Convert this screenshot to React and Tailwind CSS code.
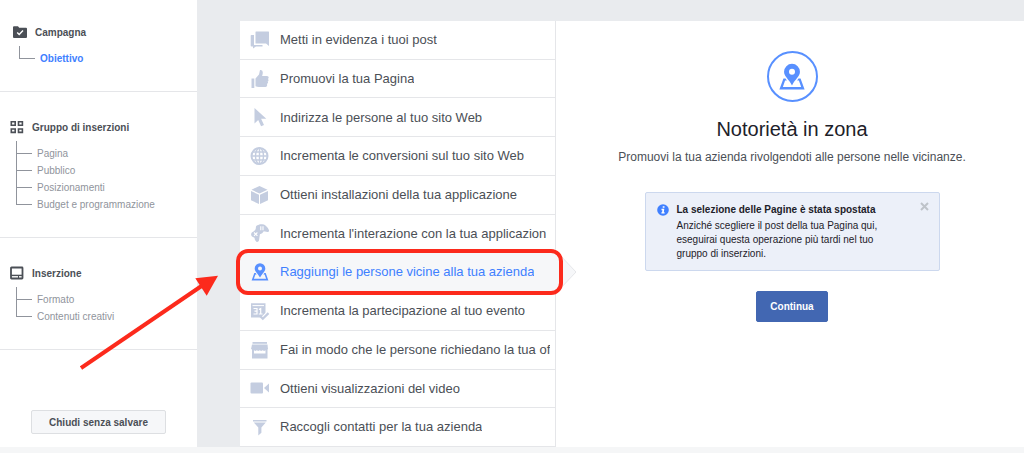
import React, { useState } from "react";
import clsx from "clsx";

const PostsIcon = () => (
  <svg width="20" height="20" viewBox="0 0 20 20" fill="currentColor" aria-hidden="true">
    <path d="M6 1.500h12.500q.5 0 .5 .5v14l-3-2.500H6q-.5 0-.5-.5V2q0-.5 .5-.5z" />
    <path d="M1.500 5H4v10h8.500v1.500H6L3 18.500v-2H1.500q-.8 0-.8-.8V5.800q0-.8 .8-.8z" />
  </svg>
);

const LikeIcon = () => (
  <svg width="20" height="20" viewBox="0 0 20 20" fill="currentColor" aria-hidden="true">
    <path d="M1.500 9.500h2.800V19H1.500z" />
    <path d="M5.500 9.500l3.500-4 1-4.500q2.800-.6 2.800 2.500 0 1.800-.7 3.500H17q1.700 0 1.700 1.500 0 1-.8 1.400.9.500.6 1.500-.2.800-.9 1.100.7.600.3 1.600-.3.700-1 .9.500.6.200 1.400-.4 1.600-1.800 1.600H9q-2 0-3.500-.8z" />
  </svg>
);

const CursorIcon = () => (
  <svg width="20" height="20" viewBox="0 0 20 20" fill="currentColor" aria-hidden="true">
    <path d="M4.500 1v15.500l3.700-3.400 2.900 6.200 2.900-1.300-2.900-6.200h5.200z" />
  </svg>
);

const GlobeIcon = () => (
  <svg width="20" height="20" viewBox="0 0 20 20" fill="none" stroke="currentColor" aria-hidden="true">
    <circle cx="9.500" cy="10" r="8" strokeWidth="2" />
    <ellipse cx="9.500" cy="10" rx="4" ry="8" strokeWidth="1.400" />
    <path d="M9.500 2v16M1.500 10h16M3 6h13M3 14h13" strokeWidth="1.400" />
  </svg>
);

const BoxIcon = () => (
  <svg width="20" height="20" viewBox="0 0 20 20" fill="currentColor" aria-hidden="true">
    <path d="M9.500 1l8 3.700-8 3.800-8-3.800z" />
    <path d="M1 6l8 3.700V19l-8-3.800zM18 6l-8 3.700V19l8-3.800z" />
  </svg>
);

const GamepadIcon = () => (
  <svg width="20" height="20" viewBox="0 0 20 20" aria-hidden="true">
    <path
      d="M6 3.500q.6-1.700 2.300-1.600Q9.500.8 11.500 1.300q2.500-.2 4 1.200 2.500 2 3.500 4.800.3 1.900-1.600 1.700l-3.600-.8q-1.300 2.300-3.900 3L9 17.500q-.8 2-2.600 1.300-1.700-.8-1.900-4L2 13.500q-1.700-2-.2-3.900Q4.500 8.500 5.700 6z"
      fill="currentColor"
    />
    <path d="M10.800 3.200v4M13 3.200v4M4 9.500l3.400 3.400M7.400 9.500L4 12.900" stroke="#fff" strokeWidth="1.100" />
  </svg>
);

const PlaceIcon = ({ size = 20 }) => (
  <svg width={size} height={size} viewBox="0 0 20 20" fill="currentColor" aria-hidden="true">
    <path
      fillRule="evenodd"
      d="M10 1.200a5.300 5.300 0 0 1 5.300 5.300c0 3.300-3.300 5-5.300 9.100-2-4.100-5.300-5.800-5.300-9.100A5.300 5.300 0 0 1 10 1.200zm0 3.300a2 2 0 1 0 0 4 2 2 0 0 0 0-4z"
    />
    <path
      fillRule="evenodd"
      d="M4.300 11h1.400l.9 1.400h-1.200L3.900 16.700h12.200l-1.500-4.300h-1.200l.9-1.400h1.400l2.700 7.400H1.600z"
    />
  </svg>
);

const EventIcon = () => (
  <svg width="20" height="20" viewBox="0 0 20 20" aria-hidden="true">
    <path d="M1 2.200h14.500v10l-3.500 4.300H1z" fill="currentColor" />
    <path d="M2.500 4.600h11.500" stroke="#fff" strokeWidth="1" />
    <path d="M3.500 7.500h3.500v5.500H3.500M4.500 10.200H7M9 8.500l1.700-1v5.500M8.800 13h3.800" fill="none" stroke="#fff" strokeWidth="1.200" />
    <path d="M12.300 15.500l1 1 4.500-4.500" fill="none" stroke="#fff" strokeWidth="3.500" />
    <path d="M9.800 14.800l3 3 5.700-5.700" fill="none" stroke="currentColor" strokeWidth="2.200" />
  </svg>
);

const StoreIcon = () => (
  <svg width="20" height="20" viewBox="0 0 20 20" fill="currentColor" aria-hidden="true">
    <path d="M2.500 2h14.500v1.800H2.500z" />
    <path d="M2 4.600h15.500l.5 4.600H1z" />
    <path
      fillRule="evenodd"
      d="M2 9h15.500v9.500H2zm2 1.300v3.200h11.500v-3.200l-1.400.8-1.500-.8-1.400.8-1.500-.8-1.400.8-1.500-.8-1.400.8z"
    />
  </svg>
);

const VideoIcon = () => (
  <svg width="20" height="20" viewBox="0 0 20 20" fill="currentColor" aria-hidden="true">
    <rect x="0.500" y="4.500" width="12.500" height="11" rx="1" />
    <path d="M19 5.500v9l-5-4.500z" />
  </svg>
);

const FunnelIcon = () => (
  <svg width="20" height="20" viewBox="0 0 20 20" fill="currentColor" aria-hidden="true">
    <path d="M3 3h13.500v1.500H3zM3.800 5.500h12l-4.400 5v5.300L8.300 18.500v-8z" />
  </svg>
);

const FolderIcon = () => (
  <svg width="14" height="12" viewBox="0 0 14 12" aria-hidden="true">
    <path d="M0 1.200Q0 .3 1 .3h4l1.200 1.400H13q1 0 1 1V11q0 1-1 1H1q-1 0-1-1z" fill="#4b4f56" />
    <path d="M4.200 6.500l2 2 3.800-4" fill="none" stroke="#fff" strokeWidth="1.400" />
  </svg>
);

const GridIcon = () => (
  <svg width="14" height="14" viewBox="0 0 14 14" fill="none" stroke="#4b4f56" strokeWidth="1.600" aria-hidden="true">
    <path d="M1.300 1.800h3.900v3.400H1.300zM8.500 1.800h3.900v3.400H8.500zM1.300 9h3.900v3.400H1.300zM8.500 9h3.900v3.400H8.500z" />
  </svg>
);

const AdIcon = () => (
  <svg width="14" height="14" viewBox="0 0 14 14" aria-hidden="true">
    <rect x="1" y="1.500" width="11.500" height="11" rx="0.500" fill="none" stroke="#4b4f56" strokeWidth="1.800" />
    <path d="M1 8.700h11.500v1.400H1z" fill="#4b4f56" />
    <path d="M8 9.500h1v2.500H8z" fill="#4b4f56" />
  </svg>
);

const sections = [
  {
    title: "Campagna",
    icon: FolderIcon,
    indent: true,
    items: [{ label: "Obiettivo", active: true }],
  },
  {
    title: "Gruppo di inserzioni",
    icon: GridIcon,
    items: [
      { label: "Pagina" },
      { label: "Pubblico" },
      { label: "Posizionamenti" },
      { label: "Budget e programmazione" },
    ],
  },
  {
    title: "Inserzione",
    icon: AdIcon,
    items: [{ label: "Formato" }, { label: "Contenuti creativi" }],
  },
];

const objectives = [
  { id: "post", label: "Metti in evidenza i tuoi post", icon: PostsIcon },
  { id: "pagina", label: "Promuovi la tua Pagina", icon: LikeIcon },
  { id: "sito", label: "Indirizza le persone al tuo sito Web", icon: CursorIcon },
  { id: "conversioni", label: "Incrementa le conversioni sul tuo sito Web", icon: GlobeIcon },
  { id: "installazioni", label: "Ottieni installazioni della tua applicazione", icon: BoxIcon },
  { id: "interazione", label: "Incrementa l'interazione con la tua applicazion", icon: GamepadIcon },
  { id: "zona", label: "Raggiungi le persone vicine alla tua azienda", icon: PlaceIcon },
  { id: "evento", label: "Incrementa la partecipazione al tuo evento", icon: EventIcon },
  { id: "offerta", label: "Fai in modo che le persone richiedano la tua of", icon: StoreIcon },
  { id: "video", label: "Ottieni visualizzazioni del video", icon: VideoIcon },
  { id: "contatti", label: "Raccogli contatti per la tua azienda", icon: FunnelIcon },
];

const SidebarSection = ({ section }) => {
  const Icon = section.icon;
  return (
    <section
      className={clsx(
        "border-b border-[#e5e6e9] pb-6",
        section.indent ? "pl-[13px] pt-6" : "pl-[10px] pt-[27px]"
      )}
    >
      <h2 className="flex h-4 items-center gap-2 text-[10px] font-bold text-[#4b4f56]">
        <Icon />
        {section.title}
      </h2>
      <ul className="mt-1.5 pl-1.5">
        <li className="h-1 border-l border-[#90949c]" aria-hidden="true"></li>
        {section.items.map((item, index) => (
          <li key={item.label} className="flex h-[17px] items-center gap-[5px]">
            <span className="flex w-4 flex-col">
              <span className="h-[9px] border-b border-l border-[#90949c]"></span>
              <span
                className={clsx(
                  "h-2 border-l",
                  index === section.items.length - 1 ? "border-transparent" : "border-[#90949c]"
                )}
              ></span>
            </span>
            <a
              href="#"
              className={clsx(
                "text-[10px] leading-4",
                item.active ? "font-bold text-[#4080ff]" : "text-[#90949c]"
              )}
            >
              {item.label}
            </a>
          </li>
        ))}
      </ul>
    </section>
  );
};

const Sidebar = () => (
  <nav className="flex w-[197px] shrink-0 flex-col bg-white">
    {sections.map((section) => (
      <SidebarSection key={section.title} section={section} />
    ))}
    <button
      type="button"
      className="mx-auto mb-[13px] mt-auto h-6 rounded-xs border border-[#dddfe2] bg-[#f6f7f9] px-[17px] text-[10px] font-bold text-[#4b4f56]"
    >
      Chiudi senza salvare
    </button>
  </nav>
);

const ObjectiveItem = ({ objective, selected, onSelect }) => {
  const Icon = objective.icon;
  return (
    <li className="relative flex border-b border-[#e5e6e9]">
      <button
        type="button"
        onClick={() => onSelect(objective.id)}
        className={clsx(
          "flex min-w-0 flex-1 items-center gap-2.5 pl-2.5 text-left text-[13px]",
          selected ? "bg-[#f6f7f9] text-[#4080ff]" : "text-[#4b4f56]"
        )}
      >
        <span className={clsx("shrink-0", selected ? "text-[#5890ff]" : "text-[#c4cde0]")}>
          <Icon />
        </span>
        <span className="overflow-hidden whitespace-nowrap">{objective.label}</span>
      </button>
      {selected && (
        <>
          <svg
            className="absolute left-full top-1/2 -translate-y-1/2"
            width="22"
            height="38"
            viewBox="0 0 22 38"
            aria-hidden="true"
          >
            <path d="M0 0L3 0L21 19L3 38L0 38z" fill="#f6f7f9" />
            <path d="M3 0L21 19L3 38" fill="none" stroke="#e5e6e9" />
          </svg>
          <span className="absolute -inset-y-1 -left-1 -right-2 rounded-xl border-4 border-[#fc2a1c]"></span>
        </>
      )}
    </li>
  );
};

const Notice = ({ onClose }) => (
  <div className="mt-[27px] flex w-[295px] items-start rounded-xs border border-[#ccd8ee] bg-[#ecf0f9] pb-[9px] pl-[11px] pr-2.5 pt-[9px]">
    <svg className="mt-0.5 shrink-0" width="12" height="12" viewBox="0 0 12 12" aria-hidden="true">
      <circle cx="6" cy="6" r="5.800" fill="#4080ff" />
      <path d="M5.700 2.200h1.800v1.500H5.700zM4.500 4.800h2.800L6.800 8.200h.8v1.400H4.400V8.200h.7l.3-2h-.9z" fill="#fff" />
    </svg>
    <div className="ml-2 flex-1 text-[10px] text-[#1d2129]">
      <h2 className="whitespace-nowrap font-bold leading-[15px]">
        La selezione delle Pagine è stata spostata
      </h2>
      <p className="mt-0.5 max-w-[215px] leading-[14px]">
        Anziché scegliere il post della tua Pagina qui, eseguirai questa operazione più tardi nel tuo
        gruppo di inserzioni.
      </p>
    </div>
    <button type="button" aria-label="Chiudi" onClick={onClose} className="text-[#bec3c9]">
      <svg width="9" height="9" viewBox="0 0 9 9" aria-hidden="true">
        <path d="M1 1l7 7M8 1l-7 7" stroke="currentColor" strokeWidth="2" />
      </svg>
    </button>
  </div>
);

const ObjectiveDetail = () => {
  const [showNotice, setShowNotice] = useState(true);

  return (
    <section className="flex flex-1 flex-col items-center bg-white pl-1 pt-[30px]">
      <div className="flex size-[51px] items-center justify-center rounded-full border-2 border-[#5890ff] text-[#5890ff]">
        <PlaceIcon size={30} />
      </div>
      <h1 className="mt-[15px] text-[20px] leading-6 text-[#1d2129]">Notorietà in zona</h1>
      <p className="mt-2 text-[12px] leading-4 text-[#4b4f56]">
        Promuovi la tua azienda rivolgendoti alle persone nelle vicinanze.
      </p>
      {showNotice && <Notice onClose={() => setShowNotice(false)} />}
      <button
        type="button"
        className="mt-5 h-[31px] rounded-xs border border-[#4267b2] bg-[#4267b2] px-[13px] text-[10px] font-bold text-white"
      >
        Continua
      </button>
    </section>
  );
};

const App = () => {
  const [selected, setSelected] = useState("zona");

  return (
    <div className="relative flex min-h-screen flex-col bg-[#f5f6f7] font-['Liberation_Sans',Arial,sans-serif]">
      <div className="flex flex-1 bg-[#e9ebee]">
        <Sidebar />
        <main className="flex flex-1 pl-[43px] pt-[21px]">
          <ul className="relative z-10 grid w-[316px] shrink-0 auto-rows-fr grid-cols-1 border-r border-[#e5e6e9] bg-white">
            {objectives.map((objective) => (
              <ObjectiveItem
                key={objective.id}
                objective={objective}
                selected={selected === objective.id}
                onSelect={setSelected}
              />
            ))}
          </ul>
          <ObjectiveDetail />
        </main>
      </div>
      <div className="h-1.5"></div>

      {/* arrow pointing at the highlighted objective */}
      <svg
        className="pointer-events-none absolute left-20 top-[270px] z-20"
        width="140"
        height="102"
        viewBox="0 0 140 102"
        aria-hidden="true"
      >
        <path d="M1 98L123 15" stroke="#fc2a1c" strokeWidth="4" />
        <path d="M138 5.700L115.300 8.300L126.700 25.700z" fill="#fc2a1c" />
      </svg>
    </div>
  );
};

export default App;
